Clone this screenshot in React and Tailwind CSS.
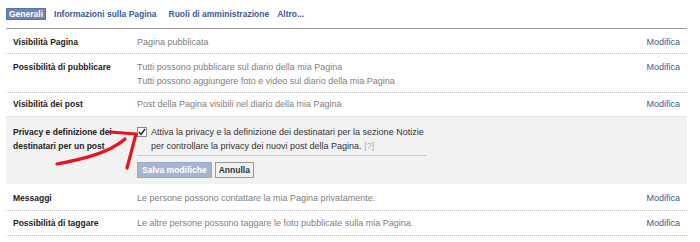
import React from "react";

const rows = [
  { label: "Visibilità Pagina", lines: ["Pagina pubblicata"], pad: "pt-[6px] pb-[4px]", border: "border-dotted border-[#bbb]" },
  {
    label: "Possibilità di pubblicare",
    lines: [
      "Tutti possono pubblicare sul diario della mia Pagina",
      "Tutti possono aggiungere foto e video sul diario della mia Pagina",
    ],
    pad: "pt-[6px] pb-[4px]",
    border: "border-dotted border-[#bbb]",
  },
  { label: "Visibilità dei post", lines: ["Post della Pagina visibili nel diario della mia Pagina"], pad: "pt-[4px] pb-[5px]", border: "border-solid border-[#e3e3e3]" },
];

const rowsBottom = [
  { label: "Messaggi", lines: ["Le persone possono contattare la mia Pagina privatamente."], pad: "pt-[7px] pb-[5px]" },
  { label: "Possibilità di taggare", lines: ["Le altre persone possono taggare le foto pubblicate sulla mia Pagina."], pad: "pt-[5px] pb-[5px]" },
];

const Row = ({ label, lines, pad, border = "border-dotted border-[#bbb]" }) => (
  <div className={`flex border-b ${border} ${pad} leading-[14px]`}>
    <div className="w-[131px] pl-[7px] text-[8.5px] font-bold text-[#222]">{label}</div>
    <div className="flex-1 text-[9px] text-[#808080]">
      {lines.map((l) => (
        <div key={l}>{l}</div>
      ))}
    </div>
    <div className="pr-[7px] text-[9px] text-[#3b5998]">Modifica</div>
  </div>
);

export default function App() {
  return (
    <div className="relative w-[700px] h-[242px] overflow-hidden bg-white font-['Liberation_Sans',Arial,sans-serif]">
      {/* tabs */}
      <div className="flex items-start h-[28px] pl-[6px] pt-[8px] gap-[8px] text-[8.5px] font-bold leading-[10px] text-[#3b5998]">
        <span className="h-[12px] px-[2px] bg-[#6d84b4] border border-[#5872a7] text-white leading-[10px]">Generali</span>
        <span className="pt-[1px]">Informazioni sulla Pagina</span>
        <span className="pt-[1px] ml-[4px]">Ruoli di amministrazione</span>
        <span className="pt-[1px]">Altro...</span>
      </div>

      <div className="ml-[6px] w-[681px] border-t border-[#999]">
        {rows.map((r) => (
          <Row key={r.label} {...r} />
        ))}

        {/* privacy row (expanded) */}
        <div className="flex bg-[#f2f2f2] pt-[8px] pb-[6px] leading-[14px]">
          <div className="w-[131px] pl-[7px] text-[8.5px] font-bold text-[#222]">
            Privacy e definizione dei destinatari per un post
          </div>
          <div className="flex-1">
            <div className="w-[290px] border-b border-[#ccc] pb-[2px]">
              <div className="flex gap-[4px] text-[9px] text-[#333]">
                <span className="mt-[2px] w-[10px] h-[10px] shrink-0 border border-[#8a8a8a] bg-white flex items-center justify-center">
                  <svg width="8" height="8" viewBox="0 0 8 8">
                    <path d="M1 4 L3 6.5 L7 1" stroke="#333" strokeWidth="1.6" fill="none" />
                  </svg>
                </span>
                <div>
                  <div>Attiva la privacy e la definizione dei destinatari per la sezione Notizie</div>
                  <div>
                    per controllare la privacy dei nuovi post della Pagina. <span className="text-[#aaa]">[?]</span>
                  </div>
                </div>
              </div>
            </div>
            <div className="flex gap-[3px] mt-[6px]">
              <button className="h-[16px] px-[4px] bg-[#a7b4d1] border border-[#9aa8c8] text-white text-[8.5px] font-bold leading-[14px]">
                Salva modifiche
              </button>
              <button className="h-[16px] px-[3px] bg-[#f0f0f0] border border-[#999] text-[#333] text-[8.5px] font-bold leading-[14px]">
                Annulla
              </button>
            </div>
          </div>
        </div>

        {rowsBottom.map((r) => (
          <Row key={r.label} {...r} />
        ))}
      </div>

      {/* red arrow drawn over the page */}
      <svg className="absolute left-0 top-0 pointer-events-none" width="700" height="242">
        <path d="M57 164 C 78 160, 108 154, 125 139" stroke="#e8141b" strokeWidth="3.2" fill="none" strokeLinecap="round" />
        <path d="M110 132 L136 134 L127 168" stroke="#e8141b" strokeWidth="3.2" fill="none" strokeLinecap="round" strokeLinejoin="round" />
      </svg>
    </div>
  );
}
